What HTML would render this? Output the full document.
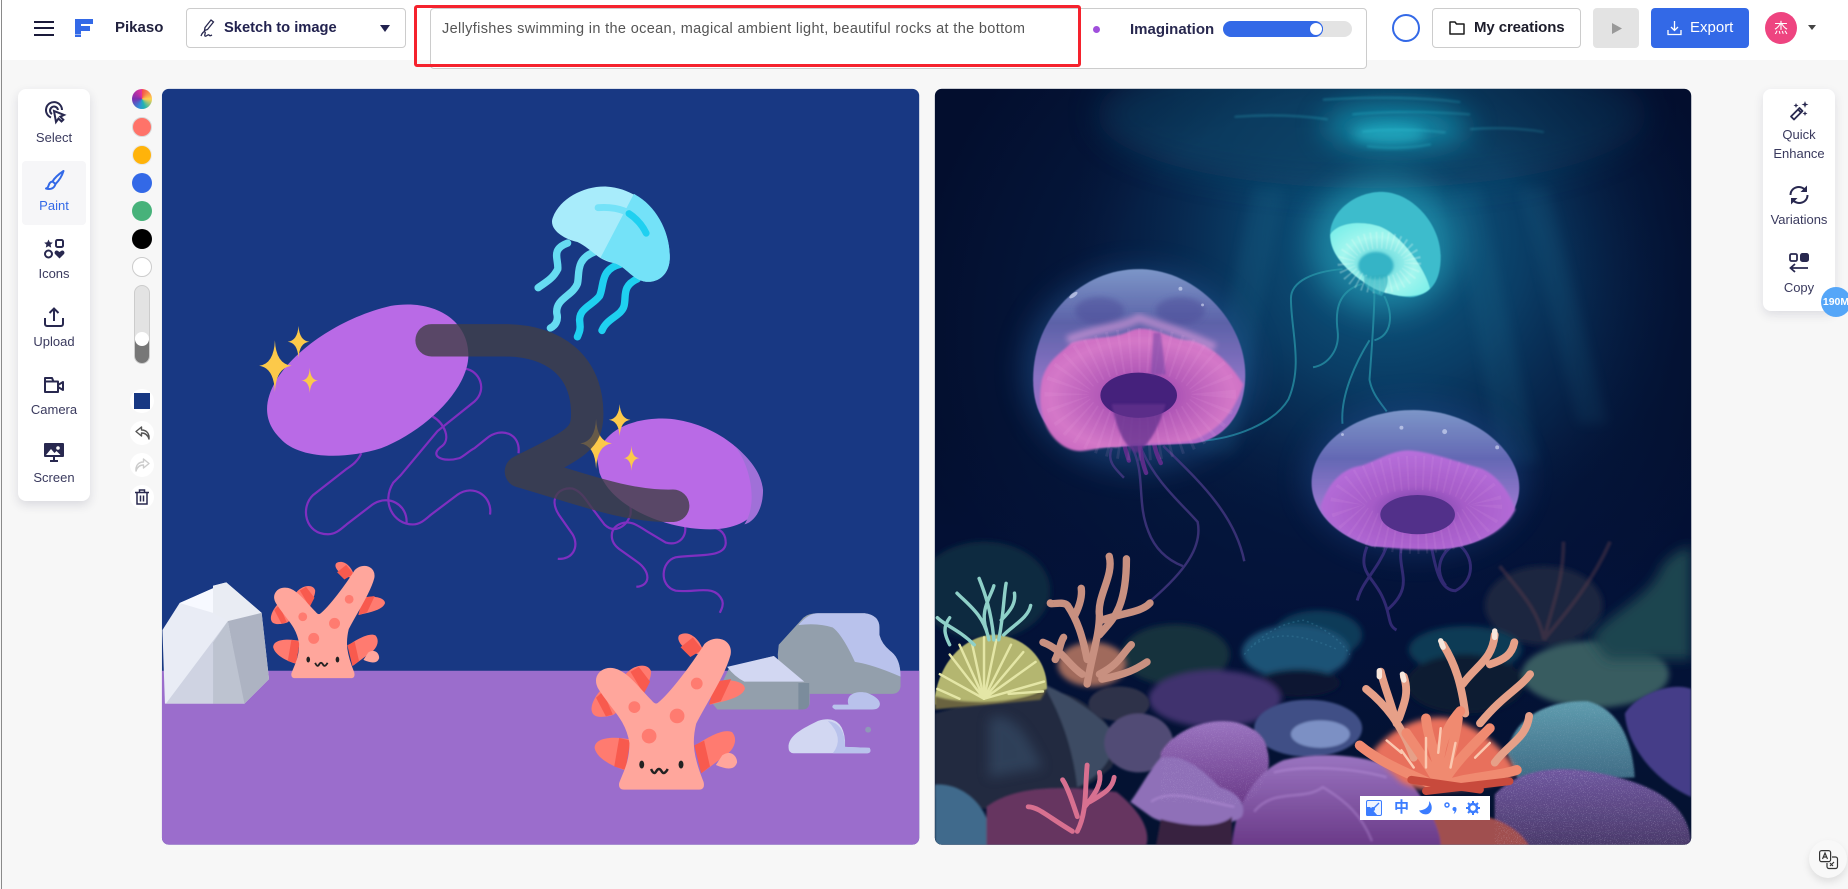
<!DOCTYPE html>
<html lang="en"><head><meta charset="utf-8"><title>Pikaso</title>
<style>
*{box-sizing:border-box}
html,body{margin:0;padding:0;width:1848px;height:889px;overflow:hidden;background:#f7f7f7;font-family:"Liberation Sans","Noto Sans CJK SC",sans-serif;color:#28284f}
.a{position:absolute}
.lb{position:absolute;text-align:center;font-size:13px;line-height:16px;color:#3a3a5e;white-space:nowrap}
.sw{position:absolute;left:132px;width:20px;height:20px;border-radius:50%}
.cb{position:absolute;left:130px;width:24px;height:24px;border-radius:50%;background:#fff}
svg{position:absolute;overflow:visible}
</style></head><body>

<div class="a" style="left:0;top:0;width:1848px;height:60px;background:#fff"></div>
<div class="a" style="left:1px;top:0;width:1px;height:889px;background:#8a8a8a"></div>

<!-- hamburger -->
<div class="a" style="left:34px;top:21px;width:20px;height:2px;background:#1a1a3a"></div>
<div class="a" style="left:34px;top:27px;width:20px;height:2px;background:#1a1a3a"></div>
<div class="a" style="left:34px;top:34px;width:20px;height:2px;background:#1a1a3a"></div>
<!-- logo -->
<svg style="left:75px;top:19px" width="19" height="18" viewBox="0 0 19 18"><path d="M0 0H18V5H6V7H15V12H6V15H0Z" fill="#3369e7"/><rect x="0" y="15.500" width="6" height="2.500" fill="#3369e7"/></svg>
<div class="a" style="left:115px;top:19px;font-size:15px;line-height:18px;font-weight:bold;color:#22223f">Pikaso</div>

<!-- mode select -->
<div class="a" style="left:186px;top:8px;width:220px;height:40px;border:1px solid #ccc;border-radius:4px;background:#fff"></div>
<svg style="left:200px;top:19px" width="15" height="19" viewBox="0 0 15 19" fill="none" stroke="#28284f" stroke-width="1.300"><path d="M11 1l2.500 2-6 7.500-3 1 .5-3z"/><path d="M1 17c1-3 3-5 4-4s-1 3 0 4 3-2 4-1 1 1 3 0"/></svg>
<div class="a" style="left:224px;top:19px;font-size:14.700px;line-height:18px;font-weight:bold;color:#22224f">Sketch to image</div>
<svg style="left:380px;top:25px" width="10" height="7"><path d="M0 0H10L5 7Z" fill="#22224f"/></svg>

<!-- prompt -->
<div class="a" style="left:430px;top:8px;width:937px;height:61px;border:1px solid #ccc;border-radius:4px;background:#fff"></div>
<div class="a" style="left:442px;top:20px;font-size:14.500px;line-height:18px;color:#555;white-space:nowrap;letter-spacing:.35px">Jellyfishes swimming in the ocean, magical ambient light, beautiful rocks at the bottom</div>
<div class="a" style="left:414px;top:5px;width:667px;height:62px;border:3px solid #f5222d;border-radius:3px"></div>
<div class="a" style="left:1093px;top:26px;width:7px;height:7px;border-radius:50%;background:#a04fdc"></div>
<div class="a" style="left:1130px;top:21px;font-size:15px;line-height:18px;font-weight:bold;color:#28284f">Imagination</div>
<div class="a" style="left:1223px;top:21px;width:129px;height:16px;border-radius:8px;background:#e3e3e3"></div>
<div class="a" style="left:1223px;top:21px;width:100px;height:16px;border-radius:8px;background:#3369e7"></div>
<div class="a" style="left:1309px;top:22px;width:14px;height:14px;border-radius:50%;background:#fff;border:1px solid #3369e7"></div>

<!-- right head -->
<div class="a" style="left:1392px;top:14px;width:28px;height:28px;border-radius:50%;border:2px solid #3369e7"></div>
<div class="a" style="left:1432px;top:8px;width:149px;height:40px;border:1px solid #ccc;border-radius:4px;background:#fff"></div>
<svg style="left:1449px;top:21px" width="16" height="14" viewBox="0 0 16 14" fill="none" stroke="#1c1c1c" stroke-width="1.500"><path d="M1 1h5l1.500 2H15v10H1z" stroke-linejoin="round"/></svg>
<div class="a" style="left:1474px;top:19px;font-size:15px;line-height:18px;font-weight:bold;color:#1c1c2a;letter-spacing:-.1px">My creations</div>
<div class="a" style="left:1593px;top:8px;width:46px;height:40px;border-radius:4px;background:#e3e3e3"></div>
<svg style="left:1612px;top:23px" width="10" height="11"><path d="M0 0L10 5.500 0 11Z" fill="#999"/></svg>
<div class="a" style="left:1651px;top:8px;width:98px;height:40px;border-radius:4px;background:#3369e7"></div>
<svg style="left:1667px;top:20px" width="15" height="16" viewBox="0 0 15 16" fill="none" stroke="#fff" stroke-width="1.300"><path d="M7.500 1v9M4 7l3.500 3.500L11 7M1 10v4.500h13V10"/></svg>
<div class="a" style="left:1690px;top:19px;font-size:15px;line-height:18px;color:#fff">Export</div>
<div class="a" style="left:1765px;top:12px;width:32px;height:32px;border-radius:50%;background:#ee4480;color:#fff;font-size:14px;line-height:32px;text-align:center">杰</div>
<svg style="left:1808px;top:25px" width="8" height="5"><path d="M0 0H8L4 5Z" fill="#444"/></svg>

<!-- left toolbar -->
<div class="a" style="left:18px;top:89px;width:72px;height:412px;border-radius:8px;background:#fff;box-shadow:0 4px 10px rgba(40,40,80,.14)"></div>
<div class="a" style="left:22px;top:161px;width:64px;height:64px;border-radius:4px;background:#f6f6f8"></div>
<svg style="left:44px;top:102px" width="22" height="22" viewBox="0 0 22 22" fill="none" stroke="#28284f" stroke-width="2"><path d="M7 15.500A8 8 0 1 1 18 8"/><path d="M8 12a4 4 0 1 1 6-4"/><path d="M10 9l2 11 2.500-3.500 3 3 1.800-1.800-3-3L20 13z" fill="#fff"/></svg>
<div class="lb" style="left:18px;width:72px;top:130px">Select</div>
<svg style="left:44px;top:170px" width="22" height="22" viewBox="0 0 22 22" fill="none" stroke="#3369e7" stroke-width="2" stroke-linejoin="round"><path d="M19.500 1C15 4 10.500 8 8.500 11.500l3 2.500C14.500 11 18 6 19.500 1z"/><path d="M8.500 11.500C5 12 5 15 4 17c-.5 1-2 1.500-2 1.500 3 1 8 1 9.500-4.500"/></svg>
<div class="lb" style="left:18px;width:72px;top:198px;color:#3369e7">Paint</div>
<svg style="left:44px;top:239px" width="20" height="20" viewBox="0 0 20 20" fill="none" stroke="#28284f" stroke-width="2"><path d="M4.500 .5l1.300 2.800 3 .3-2.200 2 .6 3-2.700-1.500L1.800 8.600l.6-3-2.200-2 3-.3z" fill="#28284f" stroke="none"/><rect x="12" y="1" width="7" height="7" rx="1.500"/><circle cx="4.500" cy="15" r="3.500"/><path d="M15.500 19.500l-4.500-4.500c-1.500-2 1-4.500 3-3l1.500 1 1.500-1c2-1.500 4.500 1 3 3z" fill="#28284f" stroke="none"/></svg>
<div class="lb" style="left:18px;width:72px;top:266px">Icons</div>
<svg style="left:44px;top:307px" width="20" height="20" viewBox="0 0 20 20" fill="none" stroke="#28284f" stroke-width="2"><path d="M10 14V1.500M5.500 6L10 1.500 14.500 6"/><path d="M1 11v6c0 1.200.8 2 2 2h14c1.200 0 2-.8 2-2v-6"/></svg>
<div class="lb" style="left:18px;width:72px;top:334px">Upload</div>
<svg style="left:44px;top:377px" width="20" height="16" viewBox="0 0 20 16" fill="none" stroke="#28284f" stroke-width="2" stroke-linejoin="round"><path d="M1 4.500h13V15H1zM1 4.500V1h7l1.500 3.500"/><path d="M14 8l5-3v8l-5-3"/></svg>
<div class="lb" style="left:18px;width:72px;top:402px">Camera</div>
<svg style="left:44px;top:443px" width="20" height="20" viewBox="0 0 20 20"><path d="M1 0h18a1 1 0 0 1 1 1v12a1 1 0 0 1-1 1H11v3h3v2H6v-2h3v-3H1a1 1 0 0 1-1-1V1a1 1 0 0 1 1-1z" fill="#28284f"/><path d="M2 12l5-6 3.500 4 2-2 4 4z" fill="#fff"/><circle cx="14" cy="5" r="1.800" fill="#fff"/></svg>
<div class="lb" style="left:18px;width:72px;top:470px">Screen</div>

<!-- swatches -->
<div class="sw" style="top:89px;background:conic-gradient(from 0deg,#f24d4d,#ffd24d 25%,#21b4b0 45%,#2f8fd8 55%,#7a2fb0 75%,#e8329a)"></div>
<div class="sw" style="top:117px;background:#ff7369;border:1px solid #d9d9d9"></div>
<div class="sw" style="top:145px;background:#ffb30a;border:1px solid #e8e8e8"></div>
<div class="sw" style="top:173px;background:#3369e7"></div>
<div class="sw" style="top:201px;background:#47b27a"></div>
<div class="sw" style="top:229px;background:#000"></div>
<div class="sw" style="top:257px;background:#fff;border:1px solid #ccc"></div>
<div class="a" style="left:134px;top:285px;width:16px;height:79px;border-radius:8px;background:linear-gradient(#e3e3e3 0,#e3e3e3 70%,#777 70%,#777 100%);border:1px solid #ccc"></div>
<div class="a" style="left:135px;top:332px;width:14px;height:14px;border-radius:50%;background:#fff"></div>
<div class="cb" style="top:389px"></div>
<div class="a" style="left:134px;top:393px;width:16px;height:16px;background:#183883"></div>
<div class="cb" style="top:421px"></div>
<svg style="left:135px;top:426px" width="15" height="14" viewBox="0 0 15 14" fill="none" stroke="#555" stroke-width="1.400" stroke-linejoin="round"><path d="M6.500 1L1 5.500 6.500 10V7c3 0 6 1 7.500 6 .5-5-2-9-7.500-9z"/></svg>
<div class="cb" style="top:453px"></div>
<svg style="left:135px;top:458px" width="15" height="14" viewBox="0 0 15 14" fill="none" stroke="#ccc" stroke-width="1.400" stroke-linejoin="round"><path d="M8.500 1L14 5.500 8.500 10V7c-3 0-6 1-7.500 6-.5-5 2-9 7.500-9z"/></svg>
<div class="cb" style="top:485px"></div>
<svg style="left:135px;top:489px" width="14" height="16" viewBox="0 0 14 16" fill="none" stroke="#28284f" stroke-width="1.500"><path d="M0 3.500h14M4.500 3.500V1h5v2.500M2 3.500V15h10V3.500M5.500 6.500v6M8.500 6.500v6"/></svg>

<!-- left canvas -->
<svg style="left:160px;top:80px" width="770" height="770" viewBox="0 0 1568 1568">
<defs>
<clipPath id="lc"><rect x="4" y="18" width="1542" height="1539" rx="14"/></clipPath>
<g id="coral">
<path d="M945,1215C960,1190 995,1185 1000,1205C1000,1225 985,1240 978,1245Z" fill="#ff7b70"/>
<path d="M958,1205L985,1250L998,1225L975,1195Z" fill="#f85a4e"/>
<path d="M900,1240C878,1262 868,1295 895,1297C915,1297 932,1292 928,1285Z" fill="#ff7b70"/>
<path d="M888,1258L908,1296L922,1292L902,1245Z" fill="#f85a4e"/>
<path d="M958,1343C920,1335 885,1340 885,1360C890,1385 930,1400 945,1405Z" fill="#ff7b70"/>
<path d="M935,1340L925,1398L948,1405L958,1345Z" fill="#f85a4e"/>
<path d="M1090,1355C1120,1335 1150,1320 1165,1328C1180,1345 1165,1370 1145,1380L1105,1410Z" fill="#ff7b70"/>
<path d="M1088,1355L1108,1345L1120,1398L1102,1412Z" fill="#f85a4e"/>
<path d="M1145,1375C1165,1362 1176,1380 1175,1390C1170,1405 1155,1405 1132,1395Z" fill="#ffa69c"/>
<path d="M1130,1225C1160,1218 1192,1225 1191,1240C1185,1258 1150,1265 1120,1272Z" fill="#ff7b70"/>
<path d="M1130,1225L1163,1220L1142,1265L1118,1272Z" fill="#f85a4e"/>
<path d="M1100,1170C1068,1165 1048,1140 1058,1130C1075,1120 1097,1135 1105,1160Z" fill="#ff7b70"/>
<path d="M1060,1155L1085,1135L1105,1160L1080,1175Z" fill="#f85a4e"/>
<path d="M945,1443L1098,1443Q1108,1443 1105,1430C1085,1380 1080,1350 1090,1310C1110,1270 1150,1210 1160,1170C1165,1140 1130,1130 1110,1150C1085,1190 1040,1250 1015,1270Q1008,1275 1000,1265C975,1240 950,1205 925,1200C900,1195 880,1215 895,1240C920,1280 950,1300 958,1350C958,1390 945,1410 937,1432Q935,1443 945,1443Z" fill="#ffa69c" stroke="#ffa69c" stroke-width="4" stroke-linejoin="round"/>
<circle cx="1093" cy="1229" r="12" fill="#ff7b70"/><circle cx="966" cy="1277" r="12" fill="#ff7b70"/><circle cx="1053" cy="1295" r="15" fill="#ff7b70"/><circle cx="996" cy="1336" r="15" fill="#ff7b70"/>
<ellipse cx="981" cy="1394" rx="5" ry="8" fill="#222"/><ellipse cx="1061" cy="1394" rx="5" ry="8" fill="#222"/>
<path d="M1000,1403q6,14 11,4q5,-8 10,0q5,10 13,-4" fill="none" stroke="#222" stroke-width="5"/>
</g>
</defs>
<g clip-path="url(#lc)">
<rect x="0" y="0" width="1568" height="1568" fill="#183883"/>
<rect x="0" y="1203" width="1568" height="365" fill="#9b6dcc"/>
<!-- purple strings -->
<g fill="none" stroke="#7f2fc0" stroke-width="4.500">
<path d="M410,760C402,778 390,785 380,792L312,845C285,870 295,925 342,925C358,925 368,915 380,905L432,865C465,842 505,865 502,903"/>
<path d="M622,588C650,592 668,630 640,655L565,715L490,805L475,820C450,860 475,905 515,905C530,905 540,895 552,885L605,845C640,820 678,850 672,885"/>
<path d="M555,685C580,700 592,730 575,745C545,765 575,780 610,770C620,765 630,755 640,750L665,730C695,705 735,720 730,760"/>
<path d="M810,975C840,978 855,950 840,925L812,885C790,850 815,828 840,832C860,838 870,860 880,872L905,905C925,925 950,910 958,885C962,860 945,830 940,825C950,822 960,825 970,828"/>
<path d="M970,1032C1000,1030 1000,1000 970,980L935,955C915,940 915,915 935,905C955,895 970,905 990,918L1030,942C1060,950 1075,925 1068,905"/>
<path d="M1080,880C1085,920 1150,895 1152,940C1155,975 1090,965 1050,972C1020,980 1015,1030 1050,1040C1090,1045 1130,1025 1145,1060C1148,1070 1143,1078 1140,1085"/>
</g>
<!-- purple bells -->
<path d="M218,670C218,590 340,490 470,460C560,445 628,490 628,560C628,630 540,715 450,750C370,775 280,770 245,730C225,710 218,690 218,670Z" fill="#b96ae6"/>
<path d="M890,770C900,710 970,685 1040,690C1130,700 1210,760 1225,830C1230,880 1190,915 1120,915C1030,915 920,870 895,800Z" fill="#b96ae6"/>
<path d="M1170,745C1200,770 1225,800 1228,835C1228,875 1210,900 1190,905C1220,860 1200,780 1170,745Z" fill="#a070d8"/>
<!-- cyan jellyfish -->
<g fill="none" stroke-linecap="round" stroke-width="15">
<path d="M830,332C795,345 812,365 810,385C800,405 785,412 770,423" stroke="#66dcf2"/>
<path d="M885,350C845,365 855,395 850,415C840,440 805,445 808,475C812,490 805,500 795,505" stroke="#66dcf2"/>
<path d="M938,375C895,385 905,420 895,440C880,460 850,465 855,495C857,510 853,515 850,523" stroke="#1fd0f0"/>
<path d="M972,405C940,420 950,440 945,460C940,480 910,485 900,510" stroke="#1fd0f0"/>
</g>
<path d="M800,280C815,240 865,215 910,217C985,222 1040,290 1038,365C1036,400 1010,415 985,410C960,405 945,375 920,372C890,365 880,345 850,330C825,325 790,305 800,280Z" fill="#a8ecfb"/>
<path d="M965,232C1010,255 1040,310 1038,365C1036,400 1010,415 985,410C960,405 945,375 920,372L897,362Z" fill="#74e2f8"/>
<path d="M892,260C915,258 940,262 955,272" fill="none" stroke="#74e2f8" stroke-width="14" stroke-linecap="round"/>
<path d="M955,272C970,282 982,295 990,312" fill="none" stroke="#1fd0f0" stroke-width="14" stroke-linecap="round"/>
<!-- sparkles -->
<g fill="#fcc94a">
<path d="M234,530Q236,578 268,582Q236,586 234,636Q232,586 202,582Q232,578 234,530Z"/>
<path d="M282,501Q284,531 304,533Q284,535 282,566Q280,535 260,533Q280,531 282,501Z"/>
<path d="M305,586Q306,611 322,612Q306,613 305,638Q304,613 288,612Q304,611 305,586Z"/>
<path d="M936,660Q938,690 958,692Q938,694 936,725Q934,694 914,692Q934,690 936,660Z"/>
<path d="M888,690Q890,736 920,740Q890,744 888,792Q886,744 856,740Q886,736 888,690Z"/>
<path d="M960,744Q961,769 976,770Q961,771 960,796Q959,771 944,770Q959,769 960,744Z"/>
</g>
<!-- brush stroke -->
<path d="M553,530L700,530C800,530 870,580 870,680C870,730 850,740 735,797C850,830 950,870 1045,867" fill="none" stroke="#413f47" stroke-width="66" stroke-linecap="round" stroke-linejoin="round" opacity=".8"/>
<!-- white rock -->
<path d="M5,1120L40,1065L135,1023L207,1085L222,1220L172,1270L10,1270Z" fill="#e9ecf5"/>
<path d="M40,1065L135,1023L108,1030L108,1085Z" fill="#f7f9ff"/>
<path d="M108,1030L135,1023L207,1085L138,1102L108,1085Z" fill="#e9ecf3"/>
<path d="M138,1102L207,1085L222,1220L172,1270L170,1270Z" fill="#adb3c2"/>
<path d="M138,1102L172,1270L108,1270L108,1145Z" fill="#bdc3d0"/>
<path d="M138,1102L108,1145L108,1270L12,1270Z" fill="#cfd3e2"/>
<!-- grey rocks -->
<path d="M1260,1150L1310,1095Q1320,1086 1340,1086L1435,1086Q1465,1090 1465,1115L1465,1130Q1470,1150 1490,1165Q1508,1180 1508,1215L1508,1235Q1506,1250 1490,1250L1290,1250Q1260,1230 1258,1170Z" fill="#939fac"/>
<path d="M1300,1110Q1320,1086 1340,1086L1435,1086Q1465,1090 1465,1115L1465,1130Q1470,1150 1490,1165Q1508,1180 1508,1215Q1450,1190 1415,1185Q1390,1130 1370,1115Q1340,1105 1300,1110Z" fill="#b9c2ec"/>
<path d="M1125,1270L1160,1195L1250,1173L1310,1225L1323,1235L1323,1270Q1320,1282 1305,1282L1135,1282Z" fill="#939fac"/>
<path d="M1155,1195L1250,1173L1312,1225L1190,1225Q1170,1215 1155,1195Z" fill="#d2d7f2"/>
<path d="M1300,1228h22v42q-1,12-14,12h-8z" fill="#7b8c9c"/>
<path d="M1280,1360C1278,1335 1310,1320 1340,1305Q1390,1290 1395,1345L1395,1358L1445,1360Q1450,1370 1440,1371L1290,1371Q1280,1370 1280,1360Z" fill="#d2d7f2"/>
<path d="M1360,1305Q1395,1310 1395,1358L1445,1360Q1450,1370 1440,1371L1370,1371Q1395,1340 1360,1305Z" fill="#b9c2ec"/>
<path d="M1372,1272h30C1395,1250 1420,1243 1440,1248Q1465,1258 1466,1270Q1466,1282 1450,1282L1375,1282Q1365,1277 1372,1272Z" fill="#b9c2ec"/>
<circle cx="1442" cy="1323" r="6" fill="#8f98b8"/>
<!-- corals -->
<use href="#coral"/>
<use href="#coral" transform="translate(-428 143) scale(.744)"/>
</g>
</svg>

<!-- right canvas -->
<svg style="left:930px;top:80px" width="770" height="770" viewBox="0 0 1568 1568">
<defs>
<clipPath id="rc"><rect x="10" y="18" width="1540" height="1539" rx="14"/></clipPath>
<radialGradient id="lite" gradientUnits="userSpaceOnUse" cx="930" cy="330" r="640"><stop offset="0" stop-color="#106a90" stop-opacity=".95"/><stop offset=".45" stop-color="#0c4c76" stop-opacity=".7"/><stop offset="1" stop-color="#082a55" stop-opacity="0"/></radialGradient>
<radialGradient id="vig" gradientUnits="userSpaceOnUse" cx="820" cy="520" r="860"><stop offset=".55" stop-color="#020a28" stop-opacity="0"/><stop offset="1" stop-color="#020a28" stop-opacity=".7"/></radialGradient>
<linearGradient id="deep" x1="0" y1="0" x2="0" y2="1"><stop offset="0" stop-color="#03123a" stop-opacity="0"/><stop offset=".45" stop-color="#03123a" stop-opacity=".85"/><stop offset="1" stop-color="#041330" stop-opacity=".9"/></linearGradient>
<linearGradient id="dome" x1="0" y1="0" x2="0" y2="1"><stop offset="0" stop-color="#7c96c8"/><stop offset=".3" stop-color="#5c62a8"/><stop offset=".6" stop-color="#8a72c4"/><stop offset="1" stop-color="#b066c8"/></linearGradient>
<linearGradient id="dome2" x1="0" y1="0" x2="0" y2="1"><stop offset="0" stop-color="#7c96c8"/><stop offset=".35" stop-color="#6468b4"/><stop offset=".7" stop-color="#9a78d0"/><stop offset="1" stop-color="#a868d0"/></linearGradient>
<radialGradient id="bell" cx=".5" cy=".55" r=".6"><stop offset="0" stop-color="#8a3eb0"/><stop offset=".35" stop-color="#b45ab8"/><stop offset=".75" stop-color="#d478c8"/><stop offset="1" stop-color="#c866c0"/></radialGradient>
<radialGradient id="bell2" cx=".5" cy=".6" r=".6"><stop offset="0" stop-color="#6a3aa0"/><stop offset=".4" stop-color="#a65cc8"/><stop offset="1" stop-color="#b870dc"/></radialGradient>
<radialGradient id="cy" cx=".48" cy=".55" r=".6"><stop offset="0" stop-color="#58d0d8"/><stop offset=".6" stop-color="#a4f6ee"/><stop offset="1" stop-color="#80f0ea"/></radialGradient>
<linearGradient id="rockP" x1="0" y1="0" x2="0" y2="1"><stop offset="0" stop-color="#9a74c0"/><stop offset="1" stop-color="#6a3a88"/></linearGradient>
<linearGradient id="rockV" x1="0" y1="0" x2="0" y2="1"><stop offset="0" stop-color="#7058a0"/><stop offset="1" stop-color="#4a3a6a"/></linearGradient>
<linearGradient id="rockT" x1="0" y1="0" x2="0" y2="1"><stop offset="0" stop-color="#5f9cae"/><stop offset="1" stop-color="#3e6a84"/></linearGradient>
<filter id="b2"><feGaussianBlur stdDeviation="2"/></filter>
<filter id="b1"><feGaussianBlur stdDeviation="1"/></filter>
<filter id="b5" x="-20%" y="-20%" width="140%" height="140%"><feGaussianBlur stdDeviation="6"/></filter>
<filter id="b12" x="-30%" y="-30%" width="160%" height="160%"><feGaussianBlur stdDeviation="12"/></filter>
<filter id="b30" x="-50%" y="-50%" width="200%" height="200%"><feGaussianBlur stdDeviation="30"/></filter>
<filter id="spk" x="0" y="0" width="100%" height="100%"><feTurbulence type="fractalNoise" baseFrequency=".55" numOctaves="2" seed="4"/><feColorMatrix values="0 0 0 0 .85 0 0 0 0 .8 0 0 0 0 1 0 0 0 7 -4.200"/><feComposite in2="SourceGraphic" operator="in"/></filter>
</defs>
<g clip-path="url(#rc)">
<rect width="1568" height="1568" fill="#05183c"/>
<rect width="1568" height="1100" fill="url(#lite)"/>
<ellipse cx="900" cy="70" rx="560" ry="150" fill="#0a4064" opacity=".75" filter="url(#b30)"/>
<ellipse cx="950" cy="95" rx="150" ry="50" fill="#18a4c0" opacity=".65" filter="url(#b30)"/>
<ellipse cx="935" cy="110" rx="75" ry="22" fill="#2cc8d8" opacity=".5" filter="url(#b12)"/>
<g stroke="#38d0e0" stroke-width="4" opacity=".28" fill="none" filter="url(#b2)">
<path d="M800,40q160,-10 280,5"/><path d="M860,70q100,-10 240,0"/><path d="M880,105q80,-8 170,2"/><path d="M890,135q70,8 130,-4"/><path d="M620,75q100,-8 190,5"/><path d="M1100,100q80,-6 150,6"/>
</g>
<g fill="#2a8aa8" opacity=".12" filter="url(#b12)">
<path d="M660,220L720,220L620,760L540,760Z"/><path d="M1060,220L1120,220L1240,780L1160,780Z"/><path d="M1200,220L1260,220L1380,700L1320,700Z"/>
</g>
<rect width="1568" height="1568" fill="url(#vig)"/>
<rect y="700" width="1568" height="868" fill="url(#deep)"/>

<!-- cyan jellyfish -->
<ellipse cx="925" cy="335" rx="150" ry="140" fill="#30c8d8" opacity=".38" filter="url(#b30)"/>
<g fill="none" stroke="#2a9aac" stroke-width="4" opacity=".7">
<path d="M840,385C780,390 735,410 735,445C735,510 760,580 730,650C700,700 620,730 550,735"/>
<path d="M880,415C830,430 825,470 830,510C835,550 810,580 780,585"/>
<path d="M905,430C905,480 900,540 895,610C900,640 920,660 930,675"/>
<path d="M925,440C945,480 940,520 905,530"/>
<path d="M895,530C870,570 835,640 840,700"/>
</g>
<g filter="url(#b1)">
<path d="M815,310C820,260 875,225 925,228C985,232 1040,295 1040,360C1040,410 1020,435 985,442C950,445 900,425 870,400C835,375 812,345 815,310Z" fill="#3ebccc"/>
<path d="M815,315C830,290 880,285 920,300C965,320 1010,390 1018,425C1000,445 950,445 905,425C860,400 815,360 815,315Z" fill="url(#cy)"/>
<ellipse cx="908" cy="378" rx="36" ry="28" fill="#36b4c6" filter="url(#b2)"/>
<ellipse cx="915" cy="372" rx="68" ry="46" fill="none" stroke="#e8fffa" stroke-width="34" stroke-dasharray="3 8" opacity=".3"/>
<path d="M885,400C880,415 890,430 920,440C930,425 935,410 930,395Z" fill="#34b0c0" opacity=".6"/>
</g>

<!-- big jellyfish -->
<ellipse cx="425" cy="590" rx="235" ry="205" fill="#2a6ab0" opacity=".38" filter="url(#b30)"/>
<g fill="none" stroke="#4a3a88" stroke-width="5" opacity=".75">
<path d="M475,745C540,810 620,880 640,980"/>
<path d="M430,750C460,820 510,860 545,900C555,950 520,1000 450,1060"/>
<path d="M410,745C440,800 420,860 445,920C460,960 490,980 515,990"/>
<path d="M370,750C360,775 375,790 395,810"/>
</g>
<g fill="none" stroke="#5a2c88" stroke-width="9" stroke-linecap="round"><path d="M385,680C390,720 395,745 405,775"/><path d="M420,680C425,720 425,760 440,800"/><path d="M455,680C450,720 455,750 470,780"/></g>
<path d="M210,610C210,480 310,385 425,385C540,385 642,490 642,600C642,680 600,730 540,740L300,750C240,720 210,680 210,610Z" fill="url(#dome)" filter="url(#b1)"/>
<g filter="url(#b5)"><ellipse cx="345" cy="470" rx="50" ry="28" fill="#4a4c98" opacity=".5"/><ellipse cx="510" cy="470" rx="50" ry="28" fill="#4a4c98" opacity=".5"/></g>
<path d="M228,610C240,570 262,560 288,535C330,520 370,530 410,510C450,495 490,530 530,530C580,540 620,590 638,620C620,680 580,720 530,735C470,745 420,735 380,748C340,745 310,765 280,750C240,730 215,680 228,610Z" fill="url(#bell)" filter="url(#b2)"/>
<path d="M280,530C340,505 390,505 425,485C470,500 520,515 580,545" fill="none" stroke="#e8a0e0" stroke-width="18" opacity=".55" filter="url(#b5)"/>
<ellipse cx="428" cy="640" rx="150" ry="90" fill="none" stroke="#f4b0e8" stroke-width="90" stroke-dasharray="5 14" opacity=".1"/>
<ellipse cx="425" cy="642" rx="78" ry="46" fill="#45217c"/>
<path d="M370,660C380,710 395,745 420,760C445,745 465,710 480,660Z" fill="#64308e" opacity=".75" filter="url(#b2)"/>
<path d="M455,515L470,515L480,600L450,600Z" fill="#7a48a8" opacity=".6" filter="url(#b2)"/>
<g fill="#e6ecff" opacity=".55"><ellipse cx="292" cy="438" rx="10" ry="4" transform="rotate(-35 292 438)"/><circle cx="510" cy="425" r="4"/><circle cx="555" cy="458" r="3"/></g>

<!-- mid jellyfish -->
<ellipse cx="988" cy="810" rx="225" ry="155" fill="#2a5aa8" opacity=".32" filter="url(#b30)"/>
<g fill="none" stroke="#4a3690" stroke-width="6" opacity=".65">
<path d="M890,950C870,1000 900,1010 920,1050C940,1090 930,1110 950,1120"/>
<path d="M960,950C950,1000 990,1030 930,1080"/>
<path d="M1020,945C1030,1000 1040,1040 1070,1040C1110,1020 1110,970 1075,945C1050,950 1020,990 1050,1030"/>
<path d="M930,950C910,1000 880,1020 870,1060"/>
</g>
<path d="M777,820C777,740 870,672 985,672C1100,672 1200,750 1200,830C1200,890 1140,950 1040,955L900,950C830,930 777,880 777,820Z" fill="url(#dome2)" filter="url(#b1)"/>
<path d="M795,870C810,820 840,790 880,785C920,770 950,750 985,755C1030,760 1080,780 1120,790C1160,805 1185,850 1192,875C1170,920 1120,945 1040,955C980,958 930,955 880,940C840,925 805,900 795,870Z" fill="url(#bell2)" filter="url(#b2)"/>
<ellipse cx="990" cy="865" rx="140" ry="65" fill="none" stroke="#ecb0f0" stroke-width="70" stroke-dasharray="4 12" opacity=".1"/>
<ellipse cx="993" cy="885" rx="76" ry="40" fill="#52308a"/>
<g fill="#e6ecff" opacity=".55"><circle cx="960" cy="708" r="4"/><circle cx="1048" cy="716" r="5"/><circle cx="1155" cy="748" r="4"/><circle cx="840" cy="722" r="3"/></g>

<!-- background reef -->
<g filter="url(#b5)">
<ellipse cx="110" cy="1040" rx="135" ry="100" fill="#0f2c40"/>
<ellipse cx="500" cy="1170" rx="110" ry="62" fill="#12303e"/>
<ellipse cx="1250" cy="1070" rx="120" ry="80" fill="#1e2640"/>
<ellipse cx="790" cy="1130" rx="90" ry="50" fill="#103a58"/>
<ellipse cx="1090" cy="1160" rx="115" ry="48" fill="#0f3a54"/>
<ellipse cx="1090" cy="1230" rx="120" ry="60" fill="#111a30"/>
<ellipse cx="745" cy="1165" rx="110" ry="55" fill="#1c5276"/>
<ellipse cx="750" cy="1228" rx="85" ry="28" fill="#091530"/>
<ellipse cx="1355" cy="1210" rx="150" ry="68" fill="#385c60"/>
<ellipse cx="580" cy="1260" rx="135" ry="58" fill="#40306e"/>
</g>
<path d="M1345,1135C1390,1080 1470,1050 1490,990C1510,965 1530,955 1550,950L1550,1180L1380,1180Z" fill="#1c4450" filter="url(#b12)"/>
<g fill="none" stroke="#4088a8" stroke-width="3" opacity=".35"><path d="M640,1170q50,-60 120,-70q60,20 95,70" stroke-dasharray="4 6"/><path d="M660,1150q60,-40 170,10" stroke-dasharray="4 6"/></g>
<g fill="none" stroke="#5a3a4a" stroke-width="8" opacity=".45" filter="url(#b2)"><path d="M1250,1140C1240,1080 1200,1040 1160,990"/><path d="M1250,1140C1270,1060 1290,1020 1290,940"/><path d="M1250,1140C1300,1080 1350,1020 1385,940"/></g>
<!-- mid rocks -->
<g filter="url(#b2)">
<path d="M10,1290C120,1260 220,1220 300,1260C370,1300 390,1350 370,1400C320,1440 280,1470 150,1480C90,1490 40,1480 10,1460Z" fill="#232a40"/>
<path d="M230,1230C280,1250 360,1300 380,1340C370,1390 340,1420 300,1440C290,1350 260,1280 230,1230Z" fill="#3d4b64"/>
<ellipse cx="385" cy="1270" rx="62" ry="35" fill="#2e3148"/>
<ellipse cx="425" cy="1350" rx="70" ry="60" fill="#514c74"/>
<ellipse cx="770" cy="1320" rx="110" ry="58" fill="#3f4f86"/>
<ellipse cx="795" cy="1332" rx="60" ry="28" fill="#7c90c4"/>
<path d="M1175,1370C1190,1290 1270,1262 1340,1265C1400,1280 1430,1340 1435,1420L1200,1430Z" fill="url(#rockT)"/>
<path d="M1415,1290C1440,1250 1510,1225 1550,1240L1550,1460C1480,1430 1420,1360 1415,1290Z" fill="#443e88"/>
<path d="M470,1370C510,1300 640,1280 680,1345C705,1400 680,1450 640,1475L470,1470Z" fill="url(#rockP)"/>
</g>
<path d="M120,1300C170,1280 200,1340 230,1400L120,1420Z" fill="#37506a" opacity=".6" filter="url(#b12)"/>
<!-- foreground rocks -->
<g filter="url(#b2)">
<path d="M10,1435C60,1430 110,1470 120,1520L120,1560L10,1560Z" fill="#3f6a8c"/>
<path d="M115,1480C180,1430 300,1440 380,1450C430,1490 450,1530 440,1560L115,1560Z" fill="#663660"/>
<path d="M1150,1455C1200,1400 1290,1390 1400,1420C1480,1440 1550,1480 1550,1560L1150,1560Z" fill="url(#rockV)"/>
<path d="M1000,1500C1060,1480 1180,1490 1220,1560L1000,1560Z" fill="#a05050"/>
<path d="M615,1560C620,1480 660,1410 720,1385C800,1365 900,1375 960,1410C1000,1450 1040,1520 1040,1560Z" fill="url(#rockP)"/>
<path d="M408,1470C430,1440 450,1400 470,1380C520,1370 560,1410 590,1440C630,1450 645,1480 635,1500C600,1530 480,1520 450,1500Z" fill="#8f70b8"/>
<path d="M470,1505C520,1520 590,1525 615,1500L615,1560L460,1560Z" fill="#38203f"/>
</g>
<path d="M1150,1455C1200,1400 1290,1390 1400,1420C1480,1440 1550,1480 1550,1560L1150,1560Z" fill="#fff" filter="url(#spk)" opacity=".28"/>
<path d="M1175,1370C1190,1290 1270,1262 1340,1265C1400,1280 1430,1340 1435,1420L1200,1430Z" fill="#fff" filter="url(#spk)" opacity=".12"/>
<path d="M470,1370C510,1300 640,1280 680,1345C705,1400 680,1450 640,1475L470,1470Z" fill="#fff" filter="url(#spk)" opacity=".16"/>
<g fill="none" stroke="#c8a0e8" stroke-width="5" opacity=".35" filter="url(#b2)"><path d="M660,1490C700,1440 760,1470 800,1440C850,1470 880,1500 900,1550"/><path d="M700,1410C760,1395 860,1400 930,1420"/><path d="M450,1470C490,1440 560,1470 620,1480"/></g>
<!-- yellow coral -->
<path d="M10,1255C25,1165 90,1125 140,1130C210,1140 240,1195 238,1240C200,1268 100,1275 10,1272Z" fill="#b4b670" filter="url(#b1)"/>
<path d="M10,1255C80,1275 180,1270 238,1240L225,1262L10,1282Z" fill="#6a6440" filter="url(#b2)"/>
<g fill="none" stroke="#e4e6a6" stroke-width="5" stroke-linecap="round">
<path d="M110,1260L40,1170"/><path d="M110,1260L60,1150"/><path d="M110,1260L85,1145"/><path d="M110,1260L110,1135"/><path d="M110,1260L135,1140"/><path d="M110,1260L165,1150"/><path d="M110,1260L190,1165"/><path d="M110,1260L215,1185"/><path d="M110,1260L232,1225"/><path d="M110,1260L20,1210"/><path d="M60,1260L15,1240"/><path d="M160,1250L230,1245"/>
</g>
<g fill="none" stroke="#8ed0c8" stroke-width="7" stroke-linecap="round">
<path d="M120,1140C110,1090 80,1070 55,1045"/><path d="M130,1140C125,1080 110,1040 100,1015"/><path d="M140,1140C150,1090 150,1050 155,1025"/><path d="M150,1130C170,1110 200,1095 205,1070"/><path d="M90,1150C60,1120 30,1110 15,1095"/><path d="M115,1120C100,1080 125,1050 130,1030"/><path d="M145,1100C165,1080 175,1065 172,1045"/><path d="M40,1150C30,1130 25,1115 40,1095"/>
</g>
<!-- peach coral -->
<ellipse cx="330" cy="1190" rx="70" ry="45" fill="#a06a5c" filter="url(#b5)"/>
<g fill="none" stroke="#c89080" stroke-width="15" stroke-linecap="round">
<path d="M320,1230C330,1170 345,1130 345,1090C340,1050 375,1010 365,970"/>
<path d="M345,1130C370,1100 400,1080 400,975"/>
<path d="M350,1100C390,1085 430,1085 448,1065"/>
<path d="M320,1180C310,1130 300,1100 280,1070C270,1060 245,1070 245,1065"/>
<path d="M295,1090C305,1070 310,1050 308,1035"/>
<path d="M310,1210C280,1190 270,1160 230,1145"/>
<path d="M345,1210C385,1190 390,1170 410,1150"/>
<path d="M350,1220C400,1210 420,1200 442,1185"/>
<path d="M255,1180C265,1160 265,1145 272,1135"/>
</g>
<!-- orange coral -->
<path d="M900,1370C940,1320 1000,1290 1060,1300C1120,1320 1170,1360 1195,1410C1150,1445 1010,1460 960,1430Z" fill="#e8705c" filter="url(#b5)"/>
<g fill="none" stroke-linecap="round">
<g stroke="#e6a088" stroke-width="16">
<path d="M1090,1290C1082,1230 1070,1190 1045,1150"/>
<path d="M1085,1230C1115,1190 1145,1180 1150,1130"/>
<path d="M1140,1190C1170,1180 1185,1170 1190,1145"/>
<path d="M1120,1310C1170,1250 1200,1240 1222,1210"/>
<path d="M985,1380C960,1310 925,1270 888,1240"/>
<path d="M950,1310C938,1265 925,1235 918,1205"/>
<path d="M955,1300C968,1265 975,1245 965,1215"/>
<path d="M1150,1390C1180,1350 1215,1340 1220,1295"/>
</g>
<g stroke="#f6e6dc" stroke-width="11"><path d="M1045,1155L1040,1142"/><path d="M1150,1135L1150,1122"/><path d="M915,1215L915,1203"/><path d="M965,1222L962,1210"/></g>
<g stroke="#f08a70" stroke-width="20">
<path d="M1040,1440C1030,1390 1040,1330 1080,1285"/>
<path d="M1040,1440C1020,1400 990,1360 970,1330"/>
<path d="M1040,1440C1060,1400 1100,1360 1140,1320"/>
<path d="M1030,1440C1000,1420 930,1400 875,1355"/>
<path d="M1040,1440C1080,1420 1150,1420 1195,1405"/>
<path d="M1040,1440C1040,1390 1015,1350 1010,1300"/>
<path d="M1040,1440C1060,1380 1070,1340 1075,1300"/>
</g>
<g stroke="#c84a3c" stroke-width="16"><path d="M980,1425L1120,1445"/><path d="M1010,1448L1180,1428"/></g>
<g stroke="#fbc8b0" stroke-width="5"><path d="M1010,1400L1010,1340"/><path d="M1060,1400L1070,1350"/><path d="M960,1370L930,1345"/><path d="M1110,1380L1140,1350"/><path d="M1035,1370L1040,1320"/><path d="M985,1400L960,1365"/></g>
</g>
<!-- lower-left pink coral -->
<g fill="none" stroke="#d87090" stroke-width="10" stroke-linecap="round">
<path d="M300,1530C320,1490 315,1450 320,1395"/><path d="M315,1480C340,1450 350,1430 345,1410"/><path d="M325,1470C360,1450 372,1440 375,1420"/><path d="M300,1500C290,1470 280,1440 270,1425"/><path d="M290,1530C240,1500 220,1480 200,1480"/>
</g>
</g>
</svg>

<!-- bottom translate bar -->
<div class="a" style="left:1360px;top:796px;width:130px;height:24px;background:#fff"></div>
<svg style="left:1366px;top:800px" width="16" height="16" viewBox="0 0 16 16"><rect x=".5" y=".5" width="15" height="15" rx="1.500" fill="#eef3ff" stroke="#3b7cff"/><path d="M0 7h4l8 9H1.500A1.500 1.500 0 0 1 0 14.500z" fill="#3b7cff"/><path d="M13 3L7 9" stroke="#3b7cff" stroke-width="1.300"/><circle cx="7" cy="9" r="2" fill="#3b7cff"/></svg>
<div class="a" style="left:1394px;top:800px;width:14px;font-size:15px;line-height:16px;font-weight:bold;color:#3b7cff;text-align:center">中</div>
<svg style="left:1419px;top:801px" width="14" height="14" viewBox="0 0 14 14"><path d="M10 0C11 5 7 9 0 9.500 2 13 6 14 9 13c4-1.500 5.500-8 1-13z" fill="#3b7cff"/></svg>
<svg style="left:1444px;top:802px" width="13" height="12" viewBox="0 0 13 12" fill="#3b7cff"><circle cx="3" cy="3" r="2" fill="none" stroke="#3b7cff" stroke-width="1.500"/><circle cx="10.500" cy="7" r="2"/><path d="M12.500 7c0 2-1 4-3 5 1-1.500 1-2.500 1-3z"/></svg>
<svg style="left:1466px;top:801px" width="14" height="14" viewBox="0 0 14 14"><circle cx="7" cy="7" r="4" fill="none" stroke="#3b7cff" stroke-width="2.500"/><path d="M7 0v3M7 11v3M0 7h3M11 7h3M2 2l2 2M10 10l2 2M12 2l-2 2M4 10l-2 2" stroke="#3b7cff" stroke-width="2"/></svg>

<!-- right toolbar -->
<div class="a" style="left:1763px;top:89px;width:72px;height:222px;border-radius:8px;background:#fff;box-shadow:0 4px 10px rgba(40,40,80,.12)"></div>
<svg style="left:1789px;top:101px" width="21" height="20" viewBox="0 0 21 20" fill="none" stroke="#28284f" stroke-width="1.800"><path d="M2 15.500L10.500 7l3 3L5 18.500z" stroke-linejoin="round"/><path d="M9 8.500l3 3"/><g fill="#28284f" stroke="none"><path d="M7 2l.7 1.800L9.500 4.500 7.700 5.200 7 7l-.7-1.800L4.500 4.500l1.800-.7z"/><path d="M16 0l.9 2.600L19.500 3.500l-2.600.9L16 7l-.9-2.600L12.500 3.500l2.600-.9z"/><path d="M16 10l.7 1.800 1.800.7-1.800.7L16 15l-.7-1.800-1.800-.7 1.800-.7z"/></g></svg>
<div class="lb" style="left:1763px;width:72px;top:127px">Quick</div>
<div class="lb" style="left:1763px;width:72px;top:146px">Enhance</div>
<svg style="left:1789px;top:185px" width="20" height="20" viewBox="0 0 20 20" fill="none" stroke="#28284f" stroke-width="2"><path d="M1.500 10C1.500 5 5.500 2 10 2c3 0 5 1.500 7 3.500"/><path d="M18.500 10c0 5-4 8-8.500 8-3 0-5-1.500-7-3.500"/><path d="M18 .5V7h-6.500z" fill="#28284f" stroke="none"/><path d="M2 19.500V13h6.500z" fill="#28284f" stroke="none"/></svg>
<div class="lb" style="left:1763px;width:72px;top:212px">Variations</div>
<svg style="left:1789px;top:253px" width="20" height="20" viewBox="0 0 20 20" fill="none" stroke="#28284f" stroke-width="1.800"><rect x="1" y="1" width="7" height="7" rx="1.500"/><rect x="11" y="0" width="9" height="9" rx="2.500" fill="#28284f" stroke="none"/><path d="M19 15H2M6 11l-4.500 4L6 19"/></svg>
<div class="lb" style="left:1763px;width:72px;top:280px">Copy</div>
<div class="a" style="left:1821px;top:287px;width:30px;height:30px;border-radius:50%;background:#55a6f8;color:#fff;font-size:10.500px;font-weight:bold;line-height:30px;text-align:center;white-space:nowrap">190M</div>

<!-- translate button -->
<div class="a" style="left:1809px;top:840px;width:38px;height:38px;border-radius:50%;background:#f8f8f8;box-shadow:0 4px 8px rgba(0,0,0,.1)"></div>
<svg style="left:1819px;top:850px" width="19" height="19" viewBox="0 0 19 19" fill="none" stroke="#333" stroke-width="1.200"><rect x=".6" y=".6" width="11" height="11" rx="2"/><path d="M3.500 9L6 3l2.500 6M4.500 7h3"/><path d="M13 7h3.500a2 2 0 0 1 2 2v7.500a2 2 0 0 1-2 2H10a2 2 0 0 1-2-2V13"/><path d="M11 16l4-4M11 13l3 3"/></svg>

</body></html>
